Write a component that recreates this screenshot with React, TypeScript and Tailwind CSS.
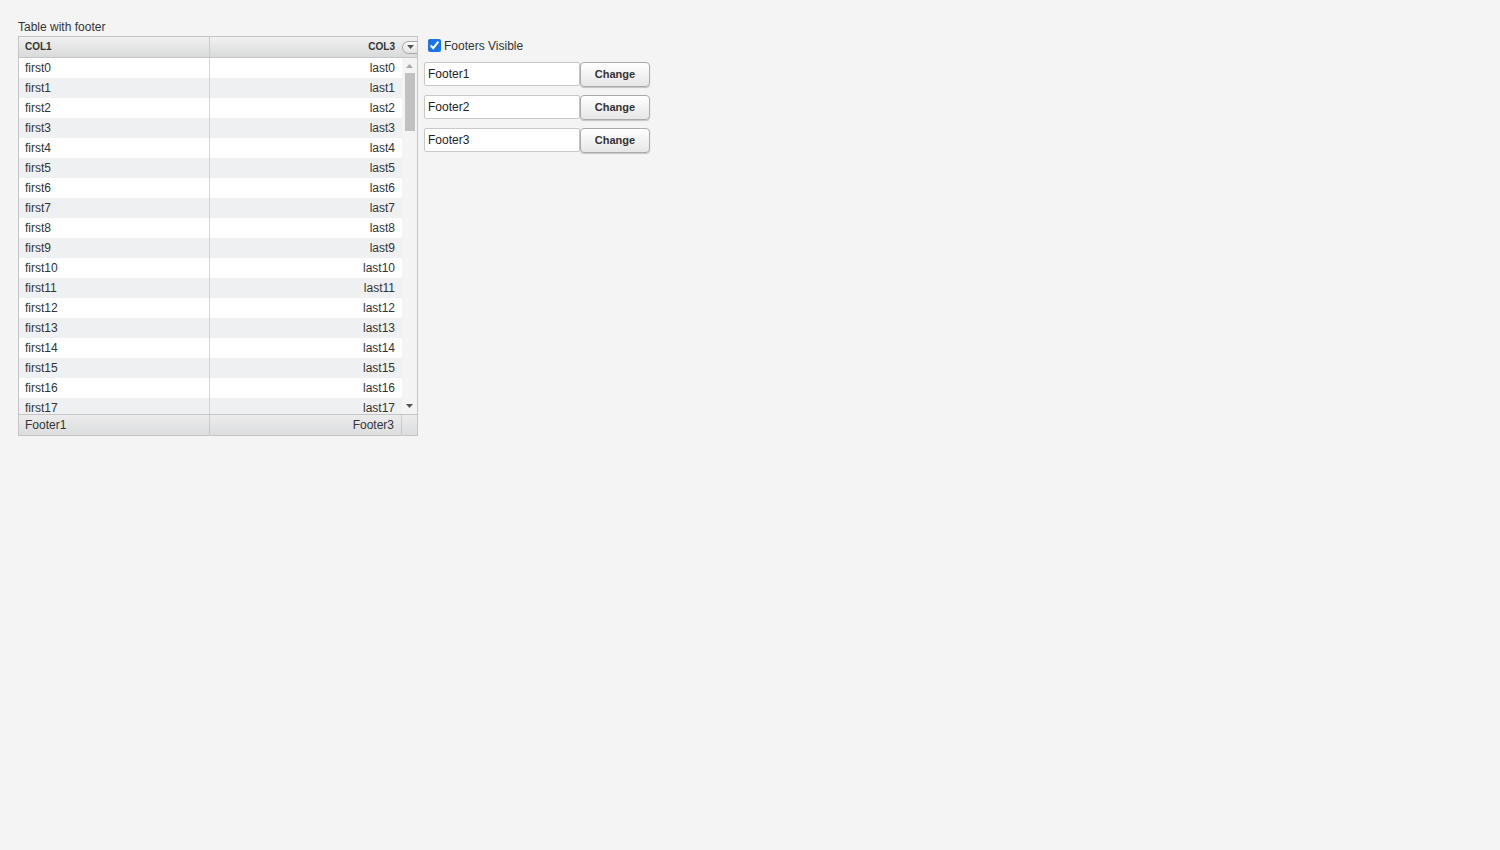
import React from 'react';

const rows = Array.from({ length: 18 }, (_, i) => ({ first: `first${i}`, last: `last${i}` }));

const footers = ['Footer1', 'Footer2', 'Footer3'];

export default function App() {
  return (
    <div className="min-h-[850px] bg-[#f4f4f4] text-[#222] text-[12px] font-['Liberation_Sans',Arial,sans-serif]">
      <div className="pt-[19px] pl-[18px]">
        <div className="h-[17px] leading-[17px] text-[#333]">Table with footer</div>
        <div className="flex items-start gap-[6px]">
          {/* Table */}
          <div className="w-[400px] border border-[#c5c5c5] bg-white">
            {/* Header */}
            <div className="flex h-[21px] border-b border-[#c5c5c5] bg-gradient-to-b from-[#f1f1f1] to-[#d9dadb]">
              <div className="w-[191px] border-r border-[#cbcbcb] pl-[6px] leading-[20px] text-[10px] font-bold text-[#333]">COL1</div>
              <div className="w-[191px] pr-[6px] text-right leading-[20px] text-[10px] font-bold text-[#333]">COL3</div>
              <div className="flex flex-1 items-center justify-end">
                <div className="flex h-[13px] w-[15px] items-center justify-center rounded-l-full border border-r-0 border-[#a8a8a8] bg-gradient-to-b from-[#fbfbfb] to-[#e3e3e3]">
                  <svg width="7" height="4" viewBox="0 0 7 4"><path d="M0 0h7L3.5 4z" fill="#555" /></svg>
                </div>
              </div>
            </div>
            {/* Body */}
            <div className="flex h-[356px] overflow-hidden">
              <div className="w-[383px]">
                {rows.map((r, i) => (
                  <div key={i} className={`flex h-[20px] leading-[20px] text-[12px] ${i % 2 ? 'bg-[#eff0f2]' : 'bg-white'}`}>
                    <div className="w-[191px] border-r border-[#d4d4d4] pl-[6px] text-[#333]">{r.first}</div>
                    <div className="w-[191px] pr-[6px] text-right text-[#333]">{r.last}</div>
                  </div>
                ))}
              </div>
              <div className="flex flex-1 flex-col items-center bg-[#f4f4f4]">
                <div className="flex h-[15px] items-center justify-center pt-[1px]">
                  <svg width="7" height="4" viewBox="0 0 7 4"><path d="M0 4h7L3.5 0z" fill="#a8a8a8" /></svg>
                </div>
                <div className="h-[58px] w-[10px] bg-[#c1c1c1]" />
                <div className="flex-1" />
                <div className="flex h-[16px] items-center justify-center">
                  <svg width="7" height="4" viewBox="0 0 7 4"><path d="M0 0h7L3.5 4z" fill="#555" /></svg>
                </div>
              </div>
            </div>
            {/* Footer */}
            <div className="flex h-[21px] border-t border-[#c5c5c5] bg-gradient-to-b from-[#ececec] to-[#dcdddf]">
              <div className="w-[191px] border-r border-[#cbcbcb] pl-[6px] leading-[20px] text-[#333]">Footer1</div>
              <div className="w-[192px] border-r border-[#cbcbcb] pr-[7px] text-right leading-[20px] text-[#333]">Footer3</div>
              <div className="flex-1" />
            </div>
          </div>
          {/* Controls */}
          <div className="flex flex-col">
            <label className="flex h-[19px] items-center gap-[3px] pl-[4px] text-[12px] text-[#333]">
              <input type="checkbox" defaultChecked className="m-0 h-[13px] w-[13px] accent-[#1a73e8]" />
              Footers Visible
            </label>
            <div className="mt-[7px] flex flex-col gap-[8px]">
              {footers.map((f) => (
                <div key={f} className="flex items-start">
                  <input
                    defaultValue={f}
                    className="h-[24px] w-[156px] rounded-[2px] border border-[#c8c8c8] bg-white px-[3px] text-[12px] text-[#222] outline-none"
                  />
                  <button className="h-[25px] w-[70px] rounded-[4px] border border-[#aaa] bg-gradient-to-b from-[#ffffff] to-[#e6e6e6] text-[11px] font-bold text-[#333] shadow-[0_1px_1px_rgba(0,0,0,0.2)]">
                    Change
                  </button>
                </div>
              ))}
            </div>
          </div>
        </div>
      </div>
    </div>
  );
}
